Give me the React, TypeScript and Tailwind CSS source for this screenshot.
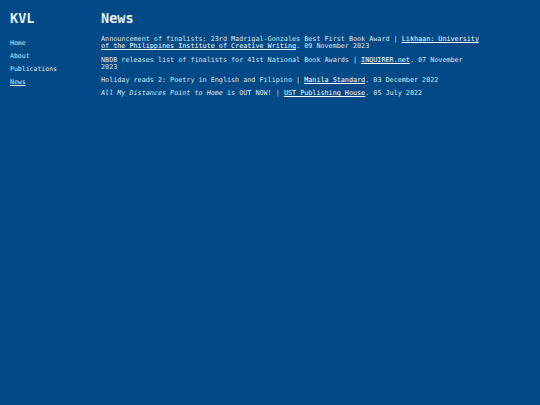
import React from "react";

const mono = { fontFamily: '"DejaVu Sans Mono", "Liberation Mono", monospace' };

export default function App() {
  return (
    <div className="min-h-[405px] w-full bg-[#014a87] text-[#dfe6ee]" style={mono}>
      <div className="flex">
        <aside className="w-[101px] shrink-0 pl-[10px] pt-[10px]">
          <h1 className="text-[13.5px] font-bold leading-[16px] text-[#e8eef5]">KVL</h1>
          <nav className="mt-[13px] flex flex-col gap-[5px] text-[6.5px] leading-[8px]">
            <a className="text-[#dfe6ee]">Home</a>
            <a className="text-[#dfe6ee]">About</a>
            <a className="text-[#dfe6ee]">Publications</a>
            <a className="text-[#dfe6ee] underline">News</a>
          </nav>
        </aside>
        <main className="pt-[10px] w-[380px]">
          <h2 className="text-[13.5px] font-bold leading-[16px] text-[#e8eef5]">News</h2>
          <ul className="mt-[10px] flex flex-col gap-[6px] text-[6.75px] leading-[7.25px]">
            <li>
              Announcement of finalists: 23rd Madrigal-Gonzales Best First Book Award |{" "}
              <a className="text-white underline">Likhaan: University of the Philippines Institute of Creative Writing</a>. 09 November 2023
            </li>
            <li>
              NBDB releases list of finalists for 41st National Book Awards |{" "}
              <a className="text-white underline">INQUIRER.net</a>. 07 November 2023
            </li>
            <li>
              Holiday reads 2: Poetry in English and Filipino |{" "}
              <a className="text-white underline">Manila Standard</a>. 03 December 2022
            </li>
            <li>
              <em>All My Distances Point to Home</em> is OUT NOW! |{" "}
              <a className="text-white underline">UST Publishing House</a>. 05 July 2022
            </li>
          </ul>
        </main>
      </div>
    </div>
  );
}
